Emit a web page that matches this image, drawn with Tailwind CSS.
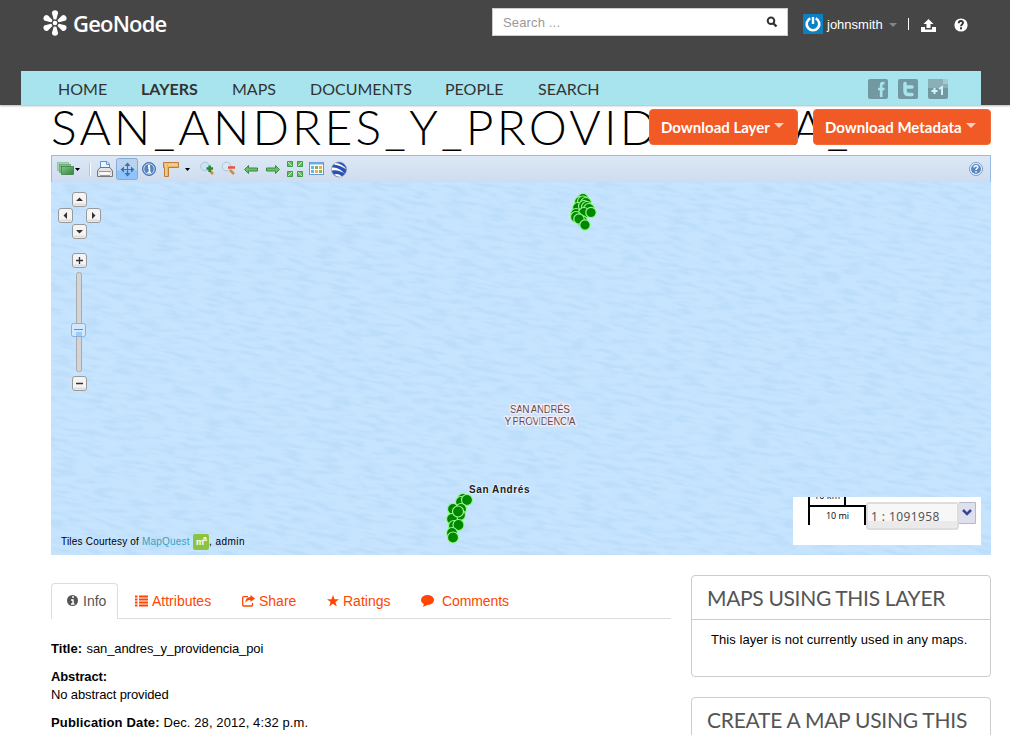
<!DOCTYPE html>
<html lang="en">
<head>
<meta charset="utf-8">
<title>GeoNode</title>
<script src="https://cdn.jsdelivr.net/npm/@tailwindcss/browser@4"></script>
</head>
<body class="h-[735px] overflow-hidden bg-white font-['Liberation_Sans',sans-serif] text-[13px] leading-[18px] text-black">
<header class="relative z-10 flex h-[105px] flex-col bg-[#464646] shadow-[0_1px_2px_rgba(0,0,0,0.3)]">
  <div class="flex h-[71px] items-start">
    <a class="ml-[41px] mt-[9px] flex h-7 w-[451px] items-center text-white">
      <svg width="28" height="28" viewBox="0 0 28 28" fill="#fff"><g><path id="p" d="M12.600 10.200L11 4.200C10.400 .2 17.600 .2 17 4.200L15.400 10.200Q14 11 12.600 10.200Z"/><use href="#p" transform="rotate(60 14 14)"/><use href="#p" transform="rotate(120 14 14)"/><use href="#p" transform="rotate(180 14 14)"/><use href="#p" transform="rotate(240 14 14)"/><use href="#p" transform="rotate(300 14 14)"/></g><circle cx="14" cy="14" r="2.300"/></svg>
      <span class="ml-[4px] font-['Open_Sans',sans-serif] text-[22px] font-semibold leading-7 tracking-[-0.8px]">GeoNode</span>
    </a>
    <div class="mt-2 flex h-7 w-[296px] items-center justify-between border border-[#ccc] bg-white pl-[10px] pr-[9px] text-[#999]"><span class="pt-[1px] tracking-[0.15px]">Search ...</span>
      <svg width="12" height="12" viewBox="0 0 12 12" fill="none" stroke="#333"><circle cx="5" cy="4.800" r="3.300" stroke-width="2"/><path d="M7.500 7.500L10.500 10.500" stroke-width="2.400"/></svg>
    </div>
    <div class="ml-[15px] mt-[14px] flex h-5 items-center text-white">
      <svg width="20" height="20" viewBox="0 0 20 20"><rect width="20" height="20" fill="#0b80c3"/><path d="M7.300 4.300A6.300 6.300 0 1 0 12.700 4.300" fill="none" stroke="#fff" stroke-width="2.600"/><path d="M10 3V10" stroke="#fff" stroke-width="2.400"/></svg>
      <span class="ml-1 w-[56px] whitespace-nowrap pt-[2px]">johnsmith</span>
      <svg class="ml-[6px] mt-[2px]" width="8" height="4"><path d="M0 0H8L4 4Z" fill="#858585"/></svg>
      <span class="ml-[11px] h-3 w-px bg-white"></span>
      <svg class="ml-[12px] mt-[2px]" width="15" height="13" viewBox="0 0 15 13" fill="#fff"><path d="M7.500 0L12.500 5H9.500V9H5.500V5H2.500ZM0 8H4V10.500H11V8H15V13H0Z"/></svg>
      <svg class="ml-[18px] mt-[2px]" width="14" height="14" viewBox="0 0 14 14"><circle cx="7" cy="7" r="6.600" fill="#fff"/><path d="M4.700 5.300C4.800 2.200 9.300 2.500 9 5C8.800 6.500 7 6.400 7 8.200" fill="none" stroke="#333" stroke-width="1.900"/><rect x="6" y="9.300" width="2" height="2" fill="#333"/></svg>
    </div>
  </div>
  <nav class="ml-[21px] flex h-[34px] w-[960px] items-center bg-[#a7e4ee] pl-[37px] pt-[2px] font-['Lato',sans-serif] text-[16px] text-[#333]">
    <a class="w-[83px]">HOME</a><a class="w-[91px] font-bold">LAYERS</a><a class="w-[78px]">MAPS</a><a class="w-[135px]">DOCUMENTS</a><a class="w-[93px]">PEOPLE</a><a class="w-[330px]">SEARCH</a>
    <div class="flex gap-[10px]">
      <svg width="20" height="20" viewBox="0 0 20 20"><rect width="20" height="20" rx="2" fill="#7299a2"/><path d="M16.500 4.200H15Q13.200 4.200 13.200 6V18M10 10H16.500" fill="none" stroke="#a7e4ee" stroke-width="2.700"/></svg>
      <svg width="20" height="20" viewBox="0 0 20 20"><rect width="20" height="20" rx="2" fill="#7299a2"/><path d="M7 4.500V12Q7 15.500 10.500 15.500H14M7 8H14" fill="none" stroke="#a7e4ee" stroke-width="3.500" stroke-linecap="round"/></svg>
      <svg width="20" height="20" viewBox="0 0 20 20"><rect width="20" height="20" rx="2" fill="#7299a2"/><path d="M0 0H15V5H20V9H0Z" fill="#8aafb7"/><path d="M15 0H20V5H15Z" fill="#a6c8ce"/><path d="M3.500 12H9.500M6.500 9V15M11 10L14 8V16" fill="none" stroke="#d4f1f5" stroke-width="2"/></svg>
    </div>
  </nav>
</header>
<main class="ml-[51px] w-[940px]">
  <div class="relative h-[50px]">
    <h1 class="whitespace-nowrap font-['Lato',sans-serif] text-[48px] font-light leading-[43px] tracking-[3.2px]">SAN_ANDRES_Y_PROVI<span class="tracking-[5.4px]">DENCI</span>A_POI</h1>
    <div class="absolute right-0 top-1 flex gap-[15px] font-['Lato',sans-serif] text-[15px] font-bold text-white">
      <a class="flex h-9 w-[149px] items-center rounded border border-[#f06a38] bg-[#f15a24] pl-[11px]">Download Layer<svg class="-mt-[3px] ml-[4px]" width="10" height="5"><path d="M0 0H10L5 5Z" fill="#fbd0c0"/></svg></a>
      <a class="flex h-9 w-[178px] items-center rounded border border-[#f06a38] bg-[#f15a24] pl-[11px]">Download Metadata<svg class="-mt-[3px] ml-[4px]" width="10" height="5"><path d="M0 0H10L5 5Z" fill="#fbd0c0"/></svg></a>
    </div>
  </div>
  <section class="h-[400px]">
    <div class="flex h-[27px] items-start justify-between border border-b-0 border-[#99bbe8] bg-linear-to-b from-[#dce8f5] to-[#cddcef] pr-[6px]">
      <svg width="300" height="26" viewBox="52 156 300 26">
        <defs><linearGradient id="gr" x2="1" y2="1"><stop stop-color="#86c886"/><stop offset="1" stop-color="#2f8238"/></linearGradient><linearGradient id="bt" x2="0" y2="1"><stop offset=".5" stop-color="#b9d3ef"/><stop offset=".62" stop-color="#8fc4fb"/></linearGradient></defs>
        <g stroke-width=".7"><rect x="57.500" y="162.500" width="11" height="8" fill="#a5d5ad" stroke="#83bd91"/><rect x="59.500" y="164.500" width="11" height="8" fill="#80bd87" stroke="#5ca46c"/><rect x="61.500" y="166.500" width="12" height="8" fill="url(#gr)" stroke="#347a41"/></g>
        <path d="M75 168H80L77.500 171ZM185 168H190L187.500 171Z"/>
        <path d="M89.500 163V176" stroke="#a8c6ea"/><path d="M90.500 163V176" stroke="#fff"/>
        <path d="M100.500 168V161.500H107L109.500 164V168Z" fill="#eaf5ff" stroke="#6294c9"/><path d="M106.500 161.500V164.500H109.500" fill="none" stroke="#6294c9"/><path d="M100 167.500H110L112.500 171V176.500H97.500V171Z" fill="#e4e4e4" stroke="#777"/><path d="M99 171.500H111M100 175.500H110" stroke="#999"/><path d="M100 173.500H110" stroke="#fff" stroke-width="2"/>
        <rect x="116.500" y="158.500" width="21" height="21" rx="2" fill="url(#bt)" stroke="#89aad4"/><path d="M121 169.500H134M127.500 163V176" fill="none" stroke="#3275b5" stroke-width="1.200"/><path d="M124.500 166L127.500 162.500L130.500 166ZM124.500 173L127.500 176.500L130.500 173ZM124 166.500L120.500 169.500L124 172.500ZM131 166.500L134.500 169.500L131 172.500Z" fill="#3275b5"/>
        <circle cx="149" cy="169" r="6.500" fill="#5485c1" stroke="#4471af"/><circle cx="149" cy="169" r="5.200" fill="none" stroke="#c6dbf3"/><path d="M148 168H149.500V172M147.500 172.500H151" stroke="#fff" stroke-width="1.500" fill="none"/><rect x="148" y="165" width="2" height="2" fill="#fff"/>
        <path d="M163.500 162.500H178.500V167.500H168.500V176.500H164.500V167.500H163.500Z" fill="#e9b66c" stroke="#bd7c38"/><path d="M166 163V176M168 165H178M170 163V165M173 163V165M176 163V165" stroke="#f8dba8"/>
        <path d="M209 170L213 174" stroke="#c88d45" stroke-width="2.500"/><circle cx="205" cy="166.500" r="4.300" fill="#cae4f5" stroke="#a6c7dc"/><path d="M206.500 168.500H213M209.700 165.500V172" stroke="#278b31" stroke-width="2.500"/>
        <path d="M230 170L234 174" stroke="#c88d45" stroke-width="2.500"/><circle cx="226.500" cy="166.500" r="4.300" fill="#d6e8f4" stroke="#a8c6df"/><path d="M228 167.500H235" stroke="#f15236" stroke-width="2.500"/>
        <path d="M244.500 169.500L248.500 165.500V168H257.500V171H248.500V173.500ZM279.500 169.500L275.500 165.500V168H266.500V171H275.500V173.500Z" fill="#6cc064" stroke="#348c41"/>
        <g fill="#6dbb69" stroke="#409c49"><path d="M287.500 161.500H292.500V166.500H287.500ZM302.500 161.500H297.500V166.500H302.500ZM287.500 176.500H292.500V171.500H287.500ZM302.500 176.500H297.500V171.500H302.500Z"/></g><path d="M288 162L292 166M302 162L298 166M288 176L292 172M302 176L298 172" stroke="#c4efbf"/>
        <rect x="309.500" y="162.500" width="14" height="12" fill="#fff" stroke="#6598d2"/><path d="M310 163.500H323" stroke="#78a8e5" stroke-width="2"/><path d="M311 167.500H314M311 171.500H314" stroke="#64b5e3" stroke-width="3"/><path d="M315 167.500H318M319 171.500H322" stroke="#79ba54" stroke-width="3"/><path d="M319 167.500H322M315 171.500H318" stroke="#efad42" stroke-width="3"/>
        <circle cx="339" cy="169.500" r="7.500" fill="#2850b5" stroke="#8a93ad" stroke-width=".8"/><path d="M331.800 167.500Q339 166.500 345 174Q339 169.500 331.700 170.500ZM335 163Q342 163 346.300 169.500Q341 165.500 334 164.500ZM334 174.500Q338 173 342 176.500Q338 177.500 334 174.500Z" fill="#fff"/>
      </svg>
      <svg class="mt-[5px]" width="16" height="16" viewBox="0 0 16 16"><circle cx="8" cy="8" r="6.500" fill="#edf5fd" stroke="#789ccc"/><circle cx="8" cy="8" r="5" fill="#5788c3"/><path d="M6 6.500C6 4 10 4.200 9.800 6.400C9.500 7.500 8 7.600 8 9M8 10V11.500" fill="none" stroke="#fff" stroke-width="1.500"/></svg>
    </div>
    <div class="relative h-[373px] overflow-hidden bg-[#c7e4fe]">
      <svg class="absolute inset-0" width="940" height="373" viewBox="51 182 940 373">
        <defs><filter id="water" x="0" y="0" width="1" height="1" color-interpolation-filters="sRGB"><feTurbulence type="fractalNoise" baseFrequency=".05 .23" numOctaves="2" seed="8"/><feColorMatrix values="0 0 0 0 .6 0 0 0 0 .78 0 0 0 0 .94 4 0 0 0 -1.700"/></filter>
        <g id="slide"><rect x=".5" y=".5" width="14" height="14" rx="2.500" fill="#f4f4f4" stroke="#999"/><path d="M2 12.500H13" stroke="#ddd" stroke-width="2"/></g></defs>
        <g transform="rotate(10 520 370)"><rect x="0" y="80" width="1050" height="600" filter="url(#water)" opacity=".2"/></g>
        <use href="#slide" x="72" y="192"/><use href="#slide" x="58" y="208"/><use href="#slide" x="86" y="208"/><use href="#slide" x="72" y="224"/><use href="#slide" x="72" y="253"/><use href="#slide" x="72" y="376"/>
        <path d="M76 201L79.500 197.500L83 201ZM76 230L79.500 233.500L83 230ZM67 212L63.500 215.500L67 219ZM92 212L95.500 215.500L92 219Z" fill="#333"/>
        <path d="M76 260.500H83M79.500 257V264M76 383.500H83" stroke="#333" stroke-width="1.300"/>
        <rect x="76.500" y="272.500" width="5" height="99" rx="2" fill="#d4d4d4" stroke="#aaa"/><rect x="71.500" y="323.500" width="14" height="13" rx="2" fill="#d3e8ff" stroke="#87afe2"/><path d="M76 334H82" stroke="#96cdfa" stroke-width="4"/><path d="M74 329.500H83" stroke="#5b91c8"/>
        <g fill="#008600" stroke="#98f98e" stroke-width="1.200"><circle cx="583" cy="199" r="5.500"/><circle cx="580" cy="202" r="5.500"/><circle cx="583" cy="201.500" r="5.500"/><circle cx="586" cy="203" r="5.500"/><circle cx="578" cy="208" r="5.500"/><circle cx="584" cy="206" r="5.500"/><circle cx="587" cy="207" r="5.500"/><circle cx="589" cy="209" r="5.500"/><circle cx="576" cy="214" r="5.500"/><circle cx="584" cy="213" r="5.500"/><circle cx="576" cy="217" r="5.500"/><circle cx="582" cy="221" r="5.500"/><circle cx="579" cy="219" r="5.200"/><circle cx="591" cy="212.500" r="5.200"/><circle cx="585" cy="225" r="5.200"/>
        <circle cx="463" cy="499" r="5.500"/><circle cx="461" cy="502" r="5.500"/><circle cx="467" cy="500" r="5.500"/><circle cx="453" cy="509" r="5.500"/><circle cx="461" cy="509" r="5.500"/><circle cx="460" cy="515" r="5.500"/><circle cx="452" cy="519" r="5.500"/><circle cx="458" cy="511.500" r="5.500"/><circle cx="454" cy="526" r="5.500"/><circle cx="458.500" cy="525" r="5.500"/><circle cx="452" cy="533" r="5.500"/><circle cx="453" cy="537.500" r="5.500"/></g>
        <g stroke="#f1eaf4" stroke-width="3" paint-order="stroke" stroke-linejoin="round" fill="#5b5054" font-family="Liberation Sans, sans-serif" font-size="10"><text x="510" y="413" textLength="60">SAN ANDRÉS</text><text x="504.500" y="425" textLength="71">Y PROVIDENCIA</text><text x="469" y="493" font-weight="bold" fill="#222" stroke="#dceefe" stroke-width="2" textLength="60.500">San Andrés</text></g>
      </svg>
      <div class="absolute left-[10px] top-[351px] flex items-center whitespace-nowrap text-[10px] leading-4 tracking-[0.2px]"><span class="w-[81px]">Tiles Courtesy of</span><span class="w-[51px] text-[#31a6bd]">MapQuest</span><span class="mt-px flex h-4 w-4 items-center justify-center rounded-[2px] bg-[#8ac540] text-[9px] font-bold leading-none tracking-[-1px] text-white">m<sup class="text-[7px]">a</sup></span><span class="tracking-[0.45px]">, admin</span></div>
      <div class="absolute left-[742px] top-[315px] h-[48px] w-[188px] overflow-hidden bg-white">
        <svg class="absolute inset-0" width="188" height="48" viewBox="793 497 188 48"><path d="M809 497V525M808 506H865V525M845 497V506" fill="none" stroke="#000" stroke-width="2"/><g font-family="Open Sans, sans-serif" font-size="9"><text x="814" y="499.300" textLength="26">10 km</text><text x="826" y="519" textLength="23">10 mi</text></g></svg>
        <div class="absolute left-[73px] top-[5px] h-[28px] w-[93px] whitespace-nowrap rounded-[3px] border-2 border-[#ddd] bg-linear-to-b from-[#f7f7f7] from-70% to-[#eaeaea] to-70% pl-[3px] font-['Noto_Sans',sans-serif] text-[12px] leading-[25px] tracking-[0.4px] text-[#555]">1 : 1091958</div>
        <svg class="absolute left-[166px] top-[5px]" width="17" height="22"><path d="M0 .5H16.500V21.500H0" fill="#dfe0ed" stroke="#b7b8ca"/><path d="M4 8L8 12L12 8" fill="none" stroke="#364994" stroke-width="2.500"/></svg>
      </div>
    </div>
  </section>
  <div class="flex h-[180px] gap-5 overflow-hidden pt-5">
    <section class="w-[620px] pt-2">
      <div class="flex h-9 border-b border-[#ddd] text-[14px] leading-[18px] text-[#ff4500]">
        <a class="-mb-px flex w-[67px] items-center rounded-t border border-b-0 border-[#ddd] bg-white pb-[2px] pl-[15px] text-[#555]"><svg class="mr-[5px]" width="11" height="11" viewBox="0 0 11 11"><circle cx="5.500" cy="5.500" r="5.500" fill="#555"/><path d="M4 5H6V9M4 9H7.500M5 2H7" fill="none" stroke="#fff" stroke-width="1.500"/></svg>Info</a>
        <a class="ml-[17px] flex w-[107px] items-center"><svg class="mr-1" width="13" height="12"><path d="M0 1.500H2.500M4 1.500H13M0 4.500H2.500M4 4.500H13M0 7.500H2.500M4 7.500H13M0 10.500H2.500M4 10.500H13" stroke="#ff4500" stroke-width="2"/></svg>Attributes</a>
        <a class="flex w-[85px] items-center"><svg class="mr-1" width="13" height="12" viewBox="0 0 13 12"><path d="M6 1.700H1.700Q.7 1.700 .7 2.700V10Q.7 11 1.700 11H9.500Q10.500 11 10.500 10V8" fill="none" stroke="#ff4500" stroke-width="1.300"/><path d="M8.500 0L13 3.500L8.500 7V5Q5 4.500 3.500 8Q3 2.300 8.500 2Z" fill="#ff4500"/></svg>Share</a>
        <a class="flex w-[94px] items-center"><svg class="mr-1" width="12" height="12" viewBox="0 0 12 12"><path d="M6 0L7.500 4.200H12L8.400 7L9.800 11.500L6 8.800L2.200 11.500L3.600 7L0 4.200H4.500Z" fill="#ff4500"/></svg>Ratings</a>
        <a class="flex items-center tracking-[-0.1px]"><svg class="mr-[8px]" width="13" height="12" viewBox="0 0 13 12"><ellipse cx="6.500" cy="5" rx="6.500" ry="5" fill="#ff4500"/><path d="M3 8Q3 10.500 1.500 11.500Q5 11.500 7 9" fill="#ff4500"/></svg>Comments</a>
      </div>
      <div class="flex flex-col gap-[10px] pt-[21px] tracking-[-0.12px]">
        <p><b class="mr-[1px] tracking-[0.05px]">Title:</b> san_andres_y_providencia_poi</p>
        <p><b>Abstract:</b><br>No abstract provided</p>
        <p class="tracking-[0.1px]"><b class="tracking-[0.15px]">Publication Date:</b> Dec. 28, 2012, 4:32 p.m.</p>
      </div>
    </section>
    <aside class="flex w-[300px] flex-col gap-5">
      <div class="h-[102px] shrink-0 rounded border border-[#ccc]"><h2 class="h-11 border-b border-[#ccc] pl-[15px] font-['Lato',sans-serif] text-[21px] leading-[44px] tracking-[-0.33px] text-[#555]">MAPS USING THIS LAYER</h2><p class="pl-[19px] pt-[11px] tracking-[0.06px]">This layer is not currently used in any maps.</p></div>
      <div class="h-[102px] shrink-0 rounded border border-[#ccc]"><h2 class="whitespace-nowrap pl-[15px] font-['Lato',sans-serif] text-[21px] leading-[44px] tracking-[-0.25px] text-[#555]">CREATE A MAP USING THIS</h2></div>
    </aside>
  </div>
</main>
</body>
</html>
